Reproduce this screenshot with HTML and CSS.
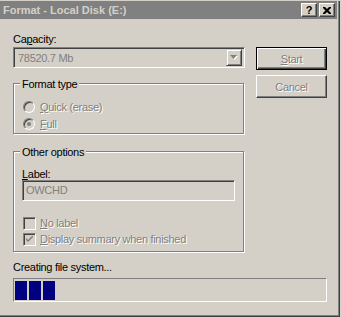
FILE: index.html
```html
<!DOCTYPE html>
<html lang="en">
<head>
    <meta charset="UTF-8">
    <meta name="viewport" content="width=device-width, initial-scale=1.0">
    <title>Format - Local Disk (E:)</title>
    <link rel="stylesheet" href="styles.css">
</head>
<body>
    <div class="window">
        <div class="titlebar">
            <span class="title">Format - Local Disk (E:)</span>
            <div class="title-buttons">
                <span class="tbtn">?</span>
                <span class="tbtn">
                    <svg width="8" height="7" viewBox="0 0 8 7"><path d="M0 0h2l2 2 2-2h2v1l-2.5 2.5 2.5 2.5v1h-2l-2-2-2 2h-2v-1l2.5-2.5-2.5-2.5z" fill="#000"/></svg>
                </span>
            </div>
        </div>

        <div class="content">
            <div class="main">
                <div class="label cap-label">Ca<u>p</u>acity:</div>
                <div class="combo">
                    <span class="combo-text">78520.7 Mb</span>
                    <span class="combo-btn">
                        <svg width="8" height="5" viewBox="0 0 8 5"><path d="M1 1h7l-3.5 4z" fill="#fff"/><path d="M0 0h7l-3.5 4z" fill="#808080"/></svg>
                    </span>
                </div>

                <div class="group group-type">
                    <span class="legend">Format type</span>
                    <div class="options">
                        <div class="option"><span class="radio"></span><span class="dis"><u>Q</u>uick (erase)</span></div>
                        <div class="option"><span class="radio on"></span><span class="dis"><u>F</u>ull</span></div>
                    </div>
                </div>

                <div class="group group-other">
                    <span class="legend">Other options</span>
                    <div class="label field-label"><u>L</u>abel:</div>
                    <div class="textbox">OWCHD</div>
                    <div class="checks">
                        <div class="option"><span class="check"></span><span class="dis"><u>N</u>o label</span></div>
                        <div class="option">
                            <span class="check">
                                <svg width="7" height="7" viewBox="0 0 7 7"><path d="M0 2l2 2 5-5v2l-5 5-2-2z" fill="#808080"/></svg>
                            </span>
                            <span class="dis"><u>D</u>isplay summary when finished</span>
                        </div>
                    </div>
                </div>
            </div>

            <div class="side">
                <span class="btn default"><span class="dis"><u>S</u>tart</span></span>
                <span class="btn"><span class="dis">Cancel</span></span>
            </div>
        </div>

        <div class="status">Creating file system...</div>
        <div class="progress">
            <span class="block"></span>
            <span class="block"></span>
            <span class="block"></span>
        </div>
    </div>
</body>
</html>
```

FILE: styles.css
```css
body {
    margin: 0;
    background: #d4d0c8;
    font-family: "Liberation Sans", Arial, sans-serif;
    font-size: 11px;
    letter-spacing: -0.3px;
    color: #000;
}
.window {
    width: 340px;
    height: 316px;
    box-sizing: border-box;
    border-right: 1px solid #404040;
    border-bottom: 1px solid #404040;
    box-shadow: inset -1px -1px #808080;
}
.titlebar {
    margin: 1px 2px 0 0;
    height: 18px;
    background: #808080;
    display: flex;
    align-items: center;
    justify-content: space-between;
    padding: 0 2px 0 3px;
}
.title {
    color: #d4d0c8;
    font-weight: bold;
    font-size: 11px;
    letter-spacing: 0;
}
.title-buttons {
    display: flex;
    gap: 2px;
}
.tbtn {
    width: 16px;
    height: 14px;
    box-sizing: border-box;
    background: #d4d0c8;
    border: 1px solid;
    border-color: #fff #404040 #404040 #fff;
    box-shadow: inset -1px -1px #808080;
    display: flex;
    align-items: center;
    justify-content: center;
    font-weight: bold;
    font-size: 11px;
    line-height: 12px;
}
.content {
    display: flex;
    padding: 14px 0 0 13px;
}
.main {
    width: 232px;
}
.label {
    line-height: 13px;
}
.combo {
    margin-top: 1px;
    height: 21px;
    box-sizing: border-box;
    border: 1px solid;
    border-color: #808080 #fff #fff #808080;
    box-shadow: inset 1px 1px #404040, inset -1px -1px #d4d0c8;
    display: flex;
    align-items: center;
    justify-content: space-between;
    padding: 2px;
}
.combo-text {
    color: #808080;
    padding-left: 2px;
}
.combo-btn {
    width: 16px;
    height: 17px;
    box-sizing: border-box;
    border: 1px solid;
    border-color: #d4d0c8 #404040 #404040 #d4d0c8;
    box-shadow: inset 1px 1px #fff, inset -1px -1px #808080;
    display: flex;
    align-items: center;
    justify-content: center;
}
.group {
    box-sizing: border-box;
    border: 1px solid #808080;
    box-shadow: inset 1px 1px #fff, 1px 1px #fff;
    width: 231px;
    padding-left: 9px;
}
.group-type {
    margin-top: 15px;
    height: 51px;
}
.group-other {
    margin-top: 17px;
    height: 101px;
}
.legend {
    display: inline-block;
    margin: -6px 0 0 -3px;
    padding: 0 2px;
    line-height: 13px;
    background: #d4d0c8;
    vertical-align: top;
}
.options {
    padding-top: 2px;
}
.option {
    height: 17px;
    display: flex;
    align-items: center;
    gap: 5px;
}
.checks {
    margin-top: 14px;
}
.checks .option {
    height: 16px;
    gap: 4px;
}
.dis {
    color: #808080;
    text-shadow: 1px 1px 0 #fff;
}
.radio {
    width: 12px;
    height: 12px;
    box-sizing: border-box;
    border-radius: 50%;
    border: 1px solid;
    border-color: #808080 #fff #fff #808080;
    box-shadow: inset 1px 1px #404040, inset -1px -1px #d4d0c8;
    background: #d4d0c8;
    display: flex;
    align-items: center;
    justify-content: center;
}
.radio.on::after {
    content: "";
    width: 4px;
    height: 4px;
    border-radius: 50%;
    background: #808080;
}
.check {
    width: 13px;
    height: 13px;
    box-sizing: border-box;
    border: 1px solid;
    border-color: #808080 #fff #fff #808080;
    box-shadow: inset 1px 1px #404040, inset -1px -1px #d4d0c8;
    background: #d4d0c8;
    display: flex;
    align-items: center;
    justify-content: center;
}
.field-label {
    margin: 4px 0 0 -1px;
    line-height: 12px;
}
.textbox {
    width: 213px;
    height: 21px;
    margin-left: -1px;
    box-sizing: border-box;
    border: 1px solid;
    border-color: #808080 #fff #fff #808080;
    box-shadow: inset 1px 1px #404040, inset -1px -1px #d4d0c8;
    color: #808080;
    padding: 3px 0 0 3px;
}
.side {
    margin-left: 11px;
    padding-top: 14px;
    display: flex;
    flex-direction: column;
    gap: 5px;
}
.btn {
    width: 71px;
    height: 23px;
    box-sizing: border-box;
    border: 1px solid;
    border-color: #fff #404040 #404040 #fff;
    box-shadow: inset -1px -1px #808080;
    display: flex;
    align-items: center;
    justify-content: center;
}
.btn.default {
    border-color: #000;
    box-shadow: inset 1px 1px #fff, inset -1px -1px #404040, inset -2px -2px #808080;
}
.status {
    margin-top: 9px;
    padding-left: 13px;
    line-height: 13px;
}
.progress {
    margin: 4px 0 0 13px;
    width: 314px;
    height: 24px;
    box-sizing: border-box;
    border: 1px solid;
    border-color: #808080 #fff #fff #808080;
    padding: 2px 1px 1px 1px;
    display: flex;
    gap: 2px;
}
.block {
    width: 12px;
    height: 19px;
    background: #000080;
}
```
